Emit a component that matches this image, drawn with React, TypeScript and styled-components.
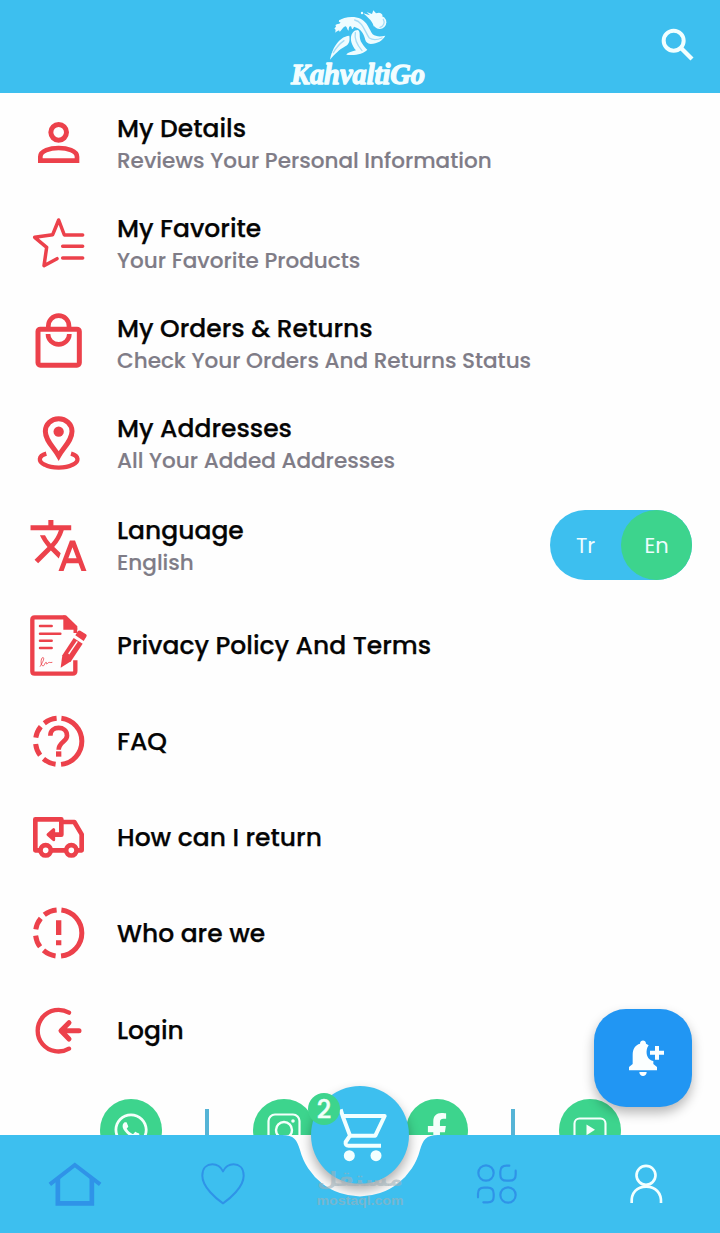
import React from "react";
import styled, { createGlobalStyle } from "styled-components";
import { MdTranslate } from "react-icons/md";
import { FaFacebookF, FaWhatsapp } from "react-icons/fa";

const BLUE = "#3dbfef";
const GREEN = "#3dd48d";
const RED = "#ec414b";
const NAV_ICON = "#2f93e8";

const GlobalStyle = createGlobalStyle`
  *, *::before, *::after { box-sizing: border-box; }
  body {
    margin: 0;
    background: #fefefe;
    font-family: Poppins, Inter, "Noto Sans", sans-serif;
    color: #050505;
  }
`;

const Screen = styled.div`
  position: relative;
  width: 720px;
  height: 1233px;
  display: grid;
  grid-template-rows: 93px 1042px 98px;
  overflow: hidden;
`;

const Header = styled.header`
  display: grid;
  grid-template-columns: 1fr 140px 1fr;
  align-items: center;
  background: ${BLUE};
`;

const SearchButton = styled.span`
  grid-column: 3;
  justify-self: end;
  width: 44px;
  height: 44px;
  margin: 0 20px 3px 0;
`;

const Main = styled.main`
  overflow: hidden;
  padding-top: 1px;
`;

const Row = styled.div<{ $height: number }>`
  display: flex;
  align-items: center;
  height: ${(p) => p.$height}px;
  padding: 0 28px 0 26px;
`;

const RowIcon = styled.span`
  flex: none;
  display: flex;
  align-items: center;
  justify-content: center;
  width: 64px;
  height: 64px;
  margin-right: 27px;
  color: ${RED};
`;

const Labels = styled.div<{ $double?: boolean }>`
  flex: 1;
  padding-top: ${(p) => (p.$double ? 3 : 0)}px;
  white-space: nowrap;
`;

const Title = styled.div`
  font-size: 25px;
  line-height: 32px;
  font-weight: 500;
  -webkit-text-stroke: 0.25px currentColor;
`;

const Subtitle = styled.div`
  font-size: 21.55px;
  line-height: 32px;
  font-weight: 500;
  color: #7f7c87;
  -webkit-text-stroke: 0.15px currentColor;
`;

const Toggle = styled.div`
  display: flex;
  width: 142px;
  height: 70px;
  border-radius: 35px;
  background: ${BLUE};
`;

const ToggleOption = styled.span<{ $active?: boolean }>`
  flex: 1;
  display: flex;
  align-items: center;
  justify-content: center;
  border-radius: 50%;
  color: #effdff;
  font-size: 21px;
  background: ${(p) => (p.$active ? GREEN : "transparent")};
`;

const Socials = styled.div`
  display: grid;
  grid-template-columns: 62px 91px 62px 91px 62px 91px 62px;
  justify-content: center;
  padding-top: 20px;
`;

const SocialCircle = styled.span`
  display: flex;
  align-items: center;
  justify-content: center;
  width: 62px;
  height: 62px;
  border-radius: 50%;
  background: ${GREEN};
  color: #f4fffb;
`;

const Divider = styled.span<{ $visible?: boolean }>`
  justify-self: center;
  width: 4px;
  height: 44px;
  margin-top: 10px;
  background: ${(p) => (p.$visible ? "#55b4d6" : "transparent")};
`;

const Nav = styled.nav`
  position: relative;
  background: #fefefe;
`;

const NavShape = styled.svg`
  position: absolute;
  inset: 0;
`;

const NavItems = styled.div`
  position: relative;
  display: grid;
  grid-template-columns: 149px 148px 126px 148px 149px;
  align-items: center;
  justify-items: center;
  height: 98px;
`;

const CartButton = styled.div`
  position: absolute;
  left: 311px;
  top: -49px;
  width: 98px;
  height: 98px;
  border-radius: 50%;
  background: ${BLUE};
  box-shadow: 0 6px 12px rgba(0, 0, 0, 0.32);
`;

const Badge = styled.span`
  position: absolute;
  left: -3px;
  top: 7px;
  width: 32px;
  height: 32px;
  border-radius: 50%;
  background: ${GREEN};
  color: #f2fff9;
  font-size: 25px;
  font-weight: 500;
  line-height: 33px;
  text-align: center;
  -webkit-text-stroke: 0.4px currentColor;
`;

const Watermark = styled.div`
  position: absolute;
  left: 310px;
  top: 27px;
  width: 100px;
  height: 50px;
`;

const Fab = styled.div`
  position: absolute;
  left: 594px;
  top: 1009px;
  width: 98px;
  height: 98px;
  border-radius: 32px;
  display: flex;
  align-items: center;
  justify-content: center;
  background: #2196f3;
  box-shadow: 0 6px 12px rgba(0, 0, 0, 0.28);
`;

type IconProps = { top: number; children: React.ReactNode };

const MenuIcon = ({ top, children }: IconProps) => (
  <svg
    width="64"
    height="64"
    viewBox={`18 ${top} 192 192`}
    fill="none"
    stroke="currentColor"
    strokeWidth="14"
  >
    {children}
  </svg>
);

const DashedRing = ({ cy }: { cy: number }) => (
  <circle
    cx="116"
    cy={cy}
    r="69.5"
    pathLength={360}
    strokeWidth="15"
    strokeDasharray="0 7 166 14 33 12 30 16 30 12 33 7"
    transform={`rotate(-90 116 ${cy})`}
  />
);

const DetailsIcon = () => (
  <MenuIcon top={36}>
    <circle cx="116" cy="97" r="23.5" strokeWidth="15" />
    <path d="M61 182V170C61 152 90 144 116 144S171 152 171 170V182Z" />
  </MenuIcon>
);

const FavoriteIcon = () => (
  <MenuIcon top={335}>
    <g strokeWidth="10.5" strokeLinecap="round" strokeLinejoin="round">
      <path d="M188 404H133L116 359L98 403L44 411L80 441L72 496L111 475" />
      <path d="M128 438H188M128 473H188" />
    </g>
  </MenuIcon>
);

const OrdersIcon = () => (
  <MenuIcon top={34}>
    <rect x="54" y="88.500" width="124" height="108" rx="7" strokeWidth="15" />
    <path d="M85 86V79A31 31 0 0 1 147 79V86M84 103A32 31 0 0 0 148 103" />
  </MenuIcon>
);

const AddressIcon = () => (
  <MenuIcon top={333}>
    <path d="M116 468C100 440 76 422 76 394A40 38 0 0 1 156 394C156 422 132 440 116 468Z" strokeWidth="15" />
    <circle cx="116" cy="395" r="15.500" fill="currentColor" stroke="none" />
    <path
      d="M79 461C54 468 54 485 74 494C96 506 136 506 158 494C178 485 178 468 153 461"
      strokeWidth="13"
    />
  </MenuIcon>
);

const PolicyIcon = () => (
  <MenuIcon top={341}>
    <path d="M134 351H44Q37 351 37 358V513Q37 520 44 520H158Q166 520 166 512V480" strokeWidth="13" />
    <path d="M130 345H138L172 378V388H130Z" fill="currentColor" stroke="none" />
    <path d="M166 384V398" strokeWidth="11" />
    <path d="M60 377H95M60 400H121M60 421H95M60 443H95" strokeWidth="7.500" strokeLinecap="round" />
    <path
      d="M60 499C66 488 74 476 70 472C64 468 60 490 67 496C74 500 74 484 79 486C80 490 78 494 84 488C87 484 90 488 97 486"
      strokeWidth="2.500"
    />
    <path d="M122 502L127 465L161 413L188 430L153 483Z" fill="currentColor" stroke="none" />
    <path
      d="M166 405L174 392Q177 389 181 391L198 402Q202 405 199 409L191 422Z"
      fill="currentColor"
      stroke="none"
    />
    <path d="M146 461L172 423" stroke="#fefefe" strokeWidth="4" />
  </MenuIcon>
);

const FaqIcon = () => (
  <MenuIcon top={30}>
    <DashedRing cy={124} />
    <path d="M91 107C91 76 141 76 141 107C141 125 116 126 116 149" />
    <path d="M116 154V170" strokeWidth="16" />
  </MenuIcon>
);

const ReturnIcon = () => (
  <MenuIcon top={319}>
    <g strokeWidth="14" strokeLinejoin="round">
      <path d="M60 452H46V359H124V405H98M126 367H163L185 404V452H171M93 452H138" />
      <circle cx="77" cy="452" r="15.500" />
      <circle cx="154" cy="452" r="15.500" />
      <path d="M84 405L101 390V420Z" fill="currentColor" strokeWidth="9" />
    </g>
  </MenuIcon>
);

const AboutIcon = () => (
  <MenuIcon top={38}>
    <DashedRing cy={131} />
    <path d="M116 93V137M116 153V168" strokeWidth="16" />
  </MenuIcon>
);

const LoginIcon = () => (
  <MenuIcon top={326}>
    <g strokeLinecap="round" strokeLinejoin="round">
      <path d="M147 367A62.500 62.500 0 1 0 147 475" strokeWidth="13" />
      <path d="M177 421H125M147 397L123 421L147 446" strokeWidth="15" />
    </g>
  </MenuIcon>
);

const SearchIcon = () => (
  <svg width="44" height="44" viewBox="48 39 132 132" fill="none" stroke="#f2ffff">
    <circle cx="101" cy="92" r="30" strokeWidth="12" />
    <path d="M123 114L156 147" strokeWidth="13" />
  </svg>
);

const Logo = () => (
  <svg width="140" height="93" viewBox="0 0 140 93">
    <g transform="translate(-20 0) scale(0.33333)" fill="#effcff">
      <path d="M206 64C220 50 252 48 272 56C292 66 298 88 308 103C318 111 334 110 346 107C338 122 322 131 302 132C292 130 288 126 286 120C282 102 274 86 252 80C250 86 246 92 244 80C238 76 236 82 236 92C230 88 232 80 226 79C218 82 216 90 209 96C208 88 203 92 196 98C196 92 199 88 193 86C199 80 200 76 195 76C200 70 206 74 212 68Z" />
      <path d="M264 90C274 98 264 112 276 130C282 140 288 146 292 149C280 162 256 167 229 164C232 158 244 156 258 151C246 138 236 114 248 98C252 92 258 90 264 90Z" />
      <path d="M238 107C240 122 238 132 226 139C206 150 196 162 180 179C184 156 196 130 214 117C222 110 230 108 238 107Z" />
      <circle cx="329" cy="67" r="20" />
      <path d="M312 80C306 60 290 50 280 40L300 46L290 36L306 42L310 31L318 40C328 36 334 38 338 46Z" />
      <circle cx="276" cy="39" r="3.500" />
      <circle cx="211" cy="63" r="4" />
    </g>
    <g
      transform="translate(-20 0) scale(0.33333)"
      fill="none"
      stroke="#a5dcf6"
      strokeWidth="4"
      strokeLinecap="round"
    >
      <path d="M254 60C280 66 284 96 298 114C310 122 326 118 336 114" />
      <path d="M256 98C252 120 264 138 276 152" />
      <path d="M222 122C208 132 198 144 190 158" />
      <path d="M340 58C346 68 340 80 330 82" />
    </g>
    <text
      x="1"
      y="84"
      fill="#f2fdff"
      stroke="#f2fdff"
      strokeWidth="1.300"
      strokeLinejoin="round"
      fontFamily="'Liberation Serif', serif"
      fontWeight="700"
      fontStyle="italic"
      fontSize="29"
      textLength="134"
      lengthAdjust="spacingAndGlyphs"
    >
      KahvaltiGo
    </text>
  </svg>
);

const InstagramIcon = () => (
  <svg width="36" height="36" viewBox="0 0 36 36" fill="none" stroke="#f4fffb">
    <rect x="2.500" y="2.500" width="31" height="31" rx="6.500" strokeWidth="2.200" />
    <circle cx="18" cy="18" r="8" strokeWidth="2.400" />
    <circle cx="27" cy="9" r="1.800" fill="#f4fffb" stroke="none" />
  </svg>
);

const YoutubeIcon = () => (
  <svg width="36" height="36" viewBox="0 0 36 36" fill="none" stroke="#f4fffb">
    <rect x="2.500" y="6.500" width="31" height="24" rx="5" strokeWidth="2.100" />
    <path d="M14.500 12.500L23 17.800L14.500 23.200Z" fill="#f4fffb" stroke="none" />
  </svg>
);

const BellPlusIcon = () => (
  <svg width="48" height="48" viewBox="147 132 144 144" fill="#fbffff">
    <path d="M177 231L188 222V195C188 176 196 165 210 161C210 148 228 148 228 161L236 166C230 174 229 184 230 191C232 203 240 211 250 213V222L261 231V241H177Z" />
    <path d="M208 246H230C230 262 208 262 208 246Z" />
    <path d="M255 168H267V182H282V194H267V209H255V194H240V182H255Z" />
  </svg>
);

const CartIcon = () => (
  <svg width="98" height="98" viewBox="213 48 294 294" fill="none" stroke="#f2ffff" strokeWidth="12">
    <path d="M302 118L308 138L330 197L317 216Q315 227 326 227H423" strokeLinejoin="round" />
    <path d="M308 138H434L406 197H328" strokeLinejoin="round" />
    <circle cx="328" cy="257" r="16.500" fill="#f2ffff" stroke="none" />
    <circle cx="408" cy="257" r="16.500" fill="#f2ffff" stroke="none" />
  </svg>
);

const HomeIcon = () => (
  <svg width="56" height="56" viewBox="139.500 228 168 168" fill="none" stroke={NAV_ICON}>
    <path d="M148 313L223 255L299 313" strokeWidth="12" />
    <path d="M172 294V370H274V294" strokeWidth="14" />
  </svg>
);

const HeartIcon = () => (
  <svg width="56" height="56" viewBox="585 228 168 168" fill="none" stroke={NAV_ICON} strokeWidth="6">
    <path
      d="M669 370C650 357 607 322 607 287C607 262 622 253 637 253C654 253 664 264 669 274C674 264 684 253 701 253C716 253 731 262 731 287C731 322 688 357 669 370Z"
      strokeLinejoin="round"
    />
  </svg>
);

const CategoriesIcon = () => (
  <svg
    width="56"
    height="56"
    viewBox="28 228 168 168"
    fill="none"
    stroke={NAV_ICON}
    strokeWidth="6.500"
    strokeLinecap="round"
  >
    <circle cx="79" cy="279" r="23" />
    <circle cx="145" cy="345" r="23" />
    <path d="M149 257H141C128 257 122 263 122 275V284C122 296 128 302 141 302H149C162 302 168 296 168 284V272" />
    <path d="M55 352V341C55 329 61 323 73 323H84C96 323 102 329 102 341V350C102 362 96 367 84 367H71" />
  </svg>
);

const ProfileIcon = () => (
  <svg width="56" height="56" viewBox="473 228 168 168" fill="none" stroke="#f2ffff" strokeWidth="8">
    <circle cx="557" cy="286" r="28.500" />
    <path d="M514 369C512 338 530 320 557.500 320S604 338 602 369" />
  </svg>
);

type Item = {
  icon: React.ReactNode;
  title: string;
  subtitle?: string;
};

const accountItems: Item[] = [
  { icon: <DetailsIcon />, title: "My Details", subtitle: "Reviews Your Personal Information" },
  { icon: <FavoriteIcon />, title: "My Favorite", subtitle: "Your Favorite Products" },
  { icon: <OrdersIcon />, title: "My Orders & Returns", subtitle: "Check Your Orders And Returns Status" },
  { icon: <AddressIcon />, title: "My Addresses", subtitle: "All Your Added Addresses" },
];

const infoItems: Item[] = [
  { icon: <PolicyIcon />, title: "Privacy Policy And Terms" },
  { icon: <FaqIcon />, title: "FAQ" },
  { icon: <ReturnIcon />, title: "How can I return" },
  { icon: <AboutIcon />, title: "Who are we" },
  { icon: <LoginIcon />, title: "Login" },
];

export default function App() {
  return (
    <>
      <GlobalStyle />
      <Screen>
        <Header>
          <span />
          <Logo />
          <SearchButton>
            <SearchIcon />
          </SearchButton>
        </Header>
        <Main>
          {accountItems.map((item) => (
            <Row key={item.title} $height={99.75}>
              <RowIcon>{item.icon}</RowIcon>
              <Labels $double>
                <Title>{item.title}</Title>
                <Subtitle>{item.subtitle}</Subtitle>
              </Labels>
            </Row>
          ))}
          <Row $height={104.5}>
            <RowIcon>
              <MdTranslate size={61} />
            </RowIcon>
            <Labels $double>
              <Title>Language</Title>
              <Subtitle>English</Subtitle>
            </Labels>
            <Toggle>
              <ToggleOption>Tr</ToggleOption>
              <ToggleOption $active>En</ToggleOption>
            </Toggle>
          </Row>
          {infoItems.map((item) => (
            <Row key={item.title} $height={96.25}>
              <RowIcon>{item.icon}</RowIcon>
              <Labels>
                <Title>{item.title}</Title>
              </Labels>
            </Row>
          ))}
          <Socials>
            <SocialCircle>
              <FaWhatsapp size={38} />
            </SocialCircle>
            <Divider $visible />
            <SocialCircle>
              <InstagramIcon />
            </SocialCircle>
            <Divider />
            <SocialCircle>
              <FaFacebookF size={34} />
            </SocialCircle>
            <Divider $visible />
            <SocialCircle>
              <YoutubeIcon />
            </SocialCircle>
          </Socials>
        </Main>
        <Nav>
          <CartButton>
            <CartIcon />
            <Badge>2</Badge>
          </CartButton>
          <NavShape width="720" height="98" viewBox="0 0 720 98">
            <path
              d="M0 0H282C294 0 297 5 300 15A62 62 0 0 0 420 15C423 5 426 0 438 0H720V98H0Z"
              fill={BLUE}
            />
          </NavShape>
          <NavItems>
            <HomeIcon />
            <HeartIcon />
            <span />
            <CategoriesIcon />
            <ProfileIcon />
          </NavItems>
          <Watermark>
            <svg width="100" height="50" viewBox="0 0 100 50" fill="#9fb0b8" fillOpacity="0.6">
              <text
                x="50"
                y="24"
                textAnchor="middle"
                direction="rtl"
                fontFamily="'DejaVu Sans', sans-serif"
                fontWeight="700"
                fontSize="20"
                textLength="86"
                lengthAdjust="spacingAndGlyphs"
              >
                مستقل
              </text>
              <text
                x="6.500"
                y="43"
                fontFamily="'Liberation Sans', sans-serif"
                fontWeight="700"
                fontSize="13.500"
                textLength="87"
                lengthAdjust="spacingAndGlyphs"
              >
                mostaql.com
              </text>
            </svg>
          </Watermark>
        </Nav>
        <Fab>
          <BellPlusIcon />
        </Fab>
      </Screen>
    </>
  );
}
